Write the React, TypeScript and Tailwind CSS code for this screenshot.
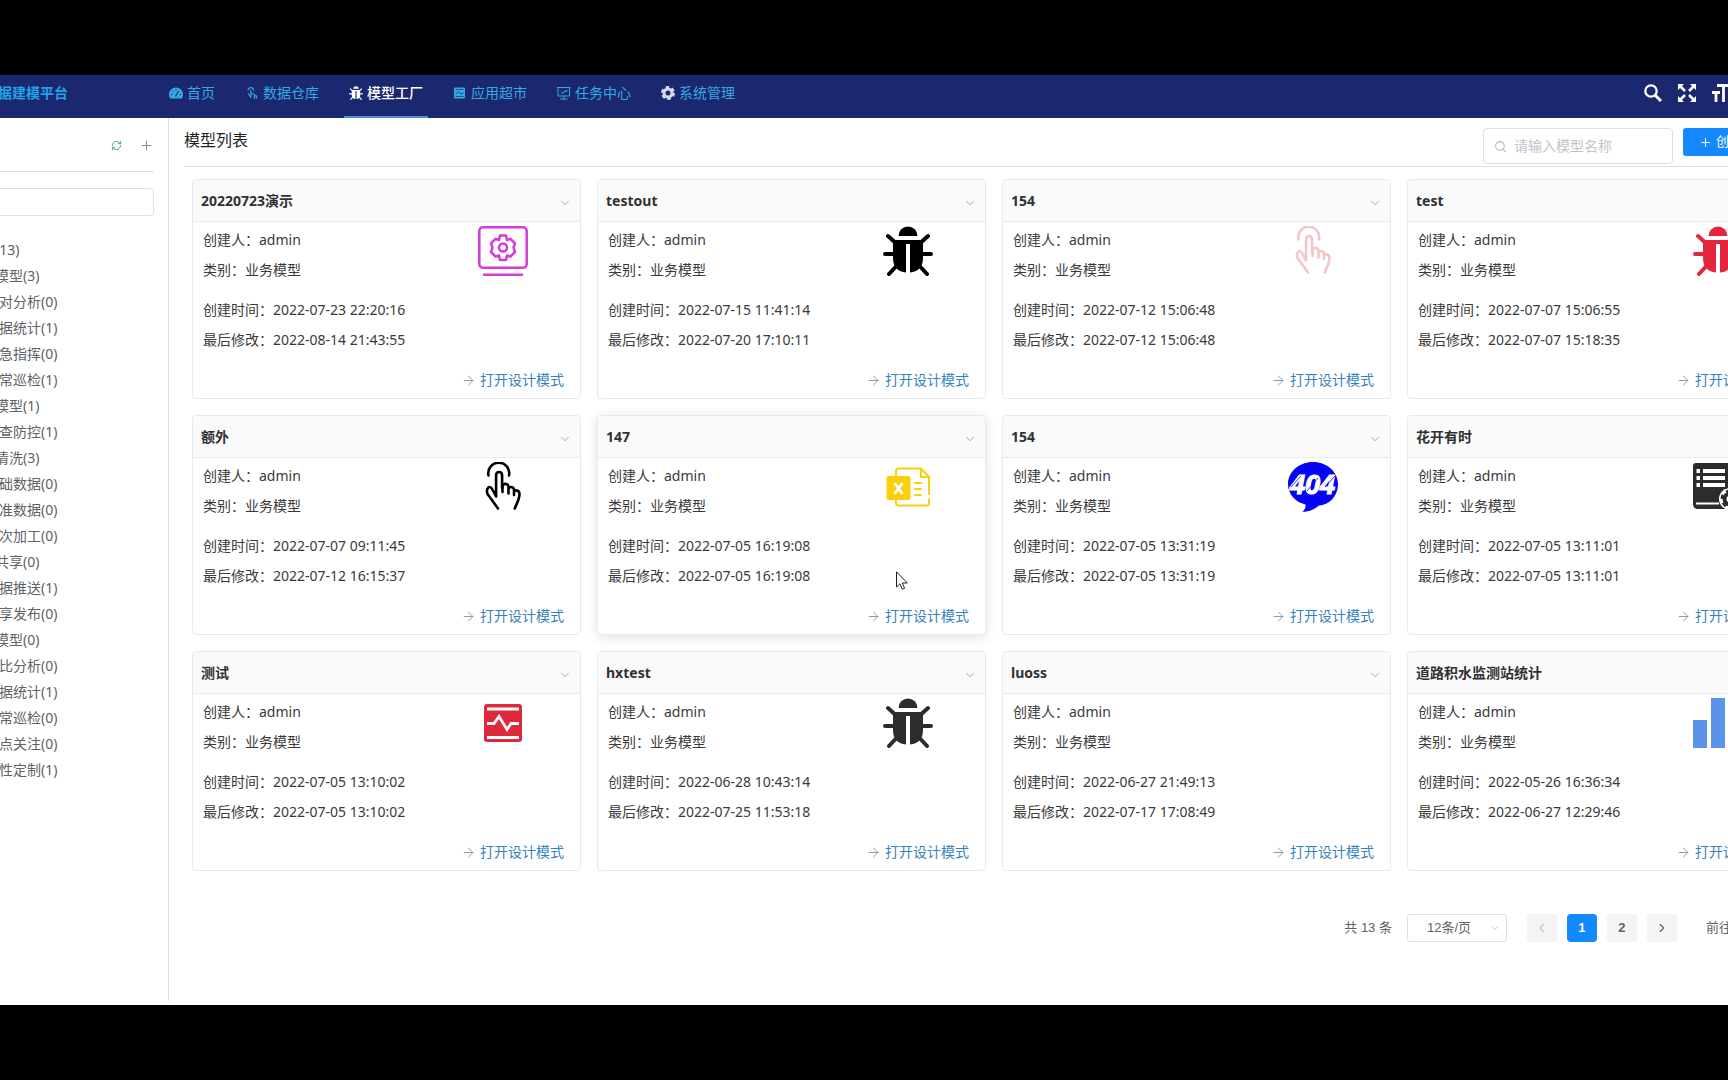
import React from 'react';
import { ArrowRight, ChevronDown, ChevronLeft, ChevronRight, Plus, RefreshCw, Search } from 'lucide-react';
import { clsx } from 'clsx';

type IconName = 'monitor' | 'bug' | 'hand' | 'excel' | 'notFound' | 'notebook' | 'pulse' | 'bars';

interface Model {
  name: string;
  created: string;
  modified: string;
  icon?: IconName;
  color?: string;
  active?: boolean;
}

const models: Model[] = [
  { name: '20220723演示', created: '2022-07-23 22:20:16', modified: '2022-08-14 21:43:55', icon: 'monitor', color: 'text-[#d53bd8]' },
  { name: 'testout', created: '2022-07-15 11:41:14', modified: '2022-07-20 17:10:11', icon: 'bug', color: 'text-black' },
  { name: '154', created: '2022-07-12 15:06:48', modified: '2022-07-12 15:06:48', icon: 'hand', color: 'text-[#f3c6ca]' },
  { name: 'test', created: '2022-07-07 15:06:55', modified: '2022-07-07 15:18:35', icon: 'bug', color: 'text-[#e3263c]' },
  { name: '额外', created: '2022-07-07 09:11:45', modified: '2022-07-12 16:15:37', icon: 'hand', color: 'text-black' },
  { name: '147', created: '2022-07-05 16:19:08', modified: '2022-07-05 16:19:08', icon: 'excel', color: 'text-[#fbd00a]', active: true },
  { name: '154', created: '2022-07-05 13:31:19', modified: '2022-07-05 13:31:19', icon: 'notFound', color: 'text-[#0505f5]' },
  { name: '花开有时', created: '2022-07-05 13:11:01', modified: '2022-07-05 13:11:01', icon: 'notebook', color: 'text-[#2c2c2c]' },
  { name: '测试', created: '2022-07-05 13:10:02', modified: '2022-07-05 13:10:02', icon: 'pulse', color: 'text-[#dc2a3c]' },
  { name: 'hxtest', created: '2022-06-28 10:43:14', modified: '2022-07-25 11:53:18', icon: 'bug', color: 'text-[#2c2c2c]' },
  { name: 'luoss', created: '2022-06-27 21:49:13', modified: '2022-07-17 17:08:49' },
  { name: '道路积水监测站统计', created: '2022-05-26 16:36:34', modified: '2022-06-27 12:29:46', icon: 'bars', color: 'text-[#5b93ea]' },
];

const tree = [
  { level: 0, label: '全部类(13)' },
  { level: 1, label: '业务模型(3)' },
  { level: 2, label: '比对分析(0)' },
  { level: 2, label: '数据统计(1)' },
  { level: 2, label: '应急指挥(0)' },
  { level: 2, label: '日常巡检(1)' },
  { level: 1, label: '管控模型(1)' },
  { level: 2, label: '排查防控(1)' },
  { level: 1, label: '数据清洗(3)' },
  { level: 2, label: '基础数据(0)' },
  { level: 2, label: '标准数据(0)' },
  { level: 2, label: '二次加工(0)' },
  { level: 1, label: '数据共享(0)' },
  { level: 2, label: '数据推送(1)' },
  { level: 2, label: '共享发布(0)' },
  { level: 1, label: '专题模型(0)' },
  { level: 2, label: '对比分析(0)' },
  { level: 2, label: '数据统计(1)' },
  { level: 2, label: '日常巡检(0)' },
  { level: 2, label: '重点关注(0)' },
  { level: 2, label: '个性定制(1)' },
];

const indent = ['pl-[49px]', 'pl-[63px]', 'pl-[81px]'];

function BugShape() {
  return (
    <>
      <path d="M15.500 10a9.500 9.500 0 0 1 19 0z" fill="currentColor" />
      <path d="M10 14h30v18c0 9-5 14-13 14.500V18h-4v28.500C15 46 10 41 10 32z" fill="currentColor" />
      <path d="M11 15.500 5 10M39 15.500l6-5.500M10 28h-8M40 28h8M12.500 41 6 48M37.500 41l6.500 7" stroke="currentColor" strokeWidth="4" strokeLinecap="round" fill="none" />
    </>
  );
}

function HandShape() {
  return (
    <g fill="none" stroke="currentColor" strokeWidth="2.600" strokeLinecap="round" strokeLinejoin="round">
      <path d="M10.500 13.500a10.500 10.500 0 1 1 20.500 0" />
      <path d="M20 46.500 9.500 32c-1.500-4 .5-7 2-7 1.200 0 2 .8 2.600 2l4 7.500V13.500c0-4.700 6-4.700 6 0v12.300" />
      <path d="M24.500 30v-6.500c2-3 6-1.500 6 1.500v6.500M30.500 26.500c2-2.500 5.500-1.500 5.500 1.500v5M36 29c2.500-1.500 5.300 0 5.500 2.700.2 5.300-2.700 9.300-4.700 14.800" />
    </g>
  );
}

function ModelIcon({ name, className }: { name: IconName; className?: string }) {
  return (
    <svg viewBox="0 0 50 50" className={clsx('h-[50px] w-[50px]', className)} aria-hidden="true">
      {name === 'monitor' && (
        <g fill="none" stroke="currentColor" strokeWidth="2.500" strokeLinecap="round" strokeLinejoin="round">
          <rect x="1.300" y="1.300" width="47.400" height="40.400" rx="3.500" />
          <path d="M6 48.700h38" />
          <path d="M22 9.500h6l1 4.500 3.500-1.200 4.500 4.500-1.500 4.200 1.500 4.500-4.500 4.500-3.500-1-1 4.500h-6l-1-4.500-3.500 1-4.500-4.500 1.500-4.500-1.500-4.200 4.500-4.500L21 14z" />
          <circle cx="25" cy="21.500" r="4" />
        </g>
      )}
      {name === 'bug' && <BugShape />}
      {name === 'hand' && <HandShape />}
      {name === 'excel' && (
        <g fill="none" stroke="currentColor" strokeWidth="2" strokeLinecap="round" strokeLinejoin="round">
          <path d="M13 13V9a2.500 2.500 0 0 1 2.500-2.500H38l8 8.500v17M13 38v3a2.500 2.500 0 0 0 2.500 2.500h28A2.500 2.500 0 0 0 46 41v-4M38 6.500V15h8" />
          <path d="M32 21h6M32 27h6M32 33h6" />
          <rect x="4.500" y="15" width="22" height="22" rx="1" fill="currentColor" />
          <path d="m11.500 21 8 11M19.500 21l-8 11" stroke="#fff" strokeWidth="2.800" strokeLinecap="butt" />
        </g>
      )}
      {name === 'notFound' && (
        <>
          <path d="M25 0c14 0 25 9.800 25 22S41 43 31 43.500c-4 3.500-9 6-16.500 6.500 2.500-2.500 3.500-5 3-7.500C7 40 0 32 0 22 0 9.800 11 0 25 0z" fill="currentColor" />
          <text x="24.500" y="32" textAnchor="middle" fontSize="27" fontStyle="italic" stroke="#fff" strokeWidth="1.200" className="fill-white font-['Liberation_Sans'] font-bold">404</text>
          <path d="m3 25 10-11M19 29l11-13M37 25l10-11" stroke="currentColor" strokeWidth="0.800" />
        </>
      )}
      {name === 'notebook' && (
        <>
          <path d="M3 1h44v46H5c-3 0-5-2-5-5V4c0-2 1-3 3-3z" fill="currentColor" />
          <path d="M3.500 7H7v4H3.500zM10 7h22v4H10zM3.500 14H7v4H3.500zM10 14h22v4H10zM3.500 21H7v4H3.500zM10 21h22v4H10z" fill="#fff" />
          <path d="M3 41.500h23" stroke="#fff" strokeWidth="2" />
          <circle cx="37" cy="37" r="11" fill="#fff" />
          <circle cx="37" cy="37" r="5.500" fill="none" stroke="currentColor" strokeWidth="4" />
          <circle cx="37" cy="37" r="8.200" fill="none" stroke="currentColor" strokeWidth="2.500" strokeDasharray="4.290 4.290" />
        </>
      )}
      {name === 'pulse' && (
        <>
          <rect x="6" y="6" width="38" height="38" rx="3" fill="currentColor" />
          <path d="M9 11h32M9 39.500h32M9 25.500h7l5-7 8 13 4-6h8" fill="none" stroke="#fff" strokeWidth="2.800" />
        </>
      )}
      {name === 'bars' && <path d="M0 22h14v28H0zM18 0h14v50H18zM36 12h14v38H36z" fill="currentColor" />}
    </svg>
  );
}

const navItems = [
  {
    label: '首页',
    icon: (
      <>
        <path fill="currentColor" d="M7 1.500a7 7 0 0 0-7 7c0 1.500.4 2.800 1.100 4h11.800c.7-1.200 1.100-2.500 1.100-4a7 7 0 0 0-7-7z" />
        <path d="M6.500 10.500 9.500 5" stroke="#1b276e" strokeWidth="1.200" />
        <path d="M2 8.500h1.200M3.500 5l.8.8M7 3v1M10.800 8.500H12" stroke="#1b276e" />
      </>
    ),
  },
  {
    label: '数据仓库',
    icon: (
      <g fill="none" stroke="currentColor" strokeWidth="1.200">
        <path d="M3 4.500a2.800 2.800 0 1 1 5.600 0M5.800 4v8M3 7.500l2.800 3.500M5.800 7.500 9.500 8.500v4.500M9.500 9.500l2 .5v2.500" />
      </g>
    ),
  },
  { label: '模型工厂', icon: <g transform="scale(.28)"><BugShape /></g> },
  {
    label: '应用超市',
    icon: (
      <>
        <rect x="1" y="1.500" width="11" height="11" rx="1" fill="currentColor" />
        <path d="M2.500 3.500h8M2.500 10.500h8M2.500 7H4l1.500-1.500L8 8.500 9 7h1.500" fill="none" stroke="#1b276e" strokeWidth="0.700" />
      </>
    ),
  },
  {
    label: '任务中心',
    icon: (
      <path d="M0 1.500h13.500M1 1.500v8.500h11.500V1.500M6.800 10v3M3 13h7.500M4 6l2 1.500 2-3 1 1.500 1.500-2" fill="none" stroke="currentColor" />
    ),
  },
  {
    label: '系统管理',
    icon: (
      <g className="text-[#d7dbee]" fill="none" stroke="currentColor">
        <circle cx="7" cy="7" r="4" strokeWidth="3" />
        <circle cx="7" cy="7" r="6" strokeWidth="2" strokeDasharray="3.600 2.680" />
      </g>
    ),
  },
];

function Header() {
  return (
    <header className="flex h-[43px] items-stretch justify-between bg-[#1b276e] pr-[94px] pl-[66px]">
      <div className="flex">
        <div className="w-[194px] pt-2 text-sm leading-5 font-bold text-[#22a3e8]">大数据建模平台</div>
        <nav className="flex gap-5">
          {navItems.map((item) => {
            const current = item.label === '模型工厂';
            return (
              <a
                key={item.label}
                href="#"
                className={clsx(
                  'flex items-start gap-1 border-b-2 px-[5px] pt-2 text-sm leading-5',
                  current ? 'border-[#4a8fdc] font-medium text-white' : 'border-transparent text-[#35a8e6]'
                )}
              >
                <svg viewBox="0 0 14 14" className="mt-[3px] h-3.5 w-3.5" aria-hidden="true">{item.icon}</svg>
                {item.label}
              </a>
            );
          })}
        </nav>
      </div>
      <div className="flex items-start gap-4 pt-[9px] text-white">
        <button type="button" aria-label="搜索">
          <svg viewBox="0 0 18 18" className="h-[18px] w-[18px]" fill="none" stroke="currentColor">
            <circle cx="7" cy="7" r="5.700" strokeWidth="2.300" />
            <path d="m11 11 6 6" strokeWidth="3" />
          </svg>
        </button>
        <button type="button" aria-label="全屏">
          <svg viewBox="0 0 18 18" className="h-[18px] w-[18px]">
            <path d="M0 0h6L0 6zM18 0v6l-6-6zM0 18v-6l6 6zM18 18h-6l6-6z" fill="currentColor" />
            <path d="m2 2 5 5M16 2l-5 5M2 16l5-5M16 16l-5-5" stroke="currentColor" strokeWidth="2.600" />
          </svg>
        </button>
        <button type="button" aria-label="布局大小">
          <svg viewBox="0 0 18 18" className="h-[18px] w-[18px]" fill="none" stroke="currentColor" strokeWidth="2.800">
            <path d="M5 1.500h13M11.500 1v17M0 8.500h8M4 8v10" />
          </svg>
        </button>
      </div>
    </header>
  );
}

function Sidebar() {
  return (
    <aside className="mb-1 w-[265px] shrink-0 border-r border-[#dcdfe6] pr-3.5">
      <div className="flex h-[54px] items-center justify-between border-b border-[#dcdfe6] pt-0.5 pl-3.5 text-base text-[#303133]">
        <span>模型分类</span>
        <div className="flex items-center gap-[17px]">
          <button type="button" aria-label="刷新" className="text-[#3f9d95]"><RefreshCw size={11} strokeWidth={2} /></button>
          <button type="button" aria-label="新增" className="text-[#6b8fa8]"><Plus size={15} strokeWidth={1.5} /></button>
        </div>
      </div>
      <input
        type="text"
        aria-label="筛选分类"
        className="mt-4 ml-3.5 block h-7 w-[236px] rounded border border-[#dcdfe6] px-3 text-sm outline-none"
      />
      <ul className="mt-[21px] text-sm text-[#606266]">
        {tree.map((node, i) => (
          <li key={i} className={clsx('h-[26px] leading-[26px] whitespace-nowrap', indent[node.level])}>
            {node.label}
          </li>
        ))}
      </ul>
    </aside>
  );
}

function ModelCard({ model }: { model: Model }) {
  return (
    <article
      className={clsx(
        'relative flex h-[220px] flex-col rounded border border-[#e8eaef] bg-white text-sm text-[#3a3a3a]',
        model.active && 'shadow-[0_2px_12px_rgba(0,0,0,0.12)]'
      )}
    >
      <div className="flex h-[42px] items-center justify-between rounded-t border-b border-[#e8eaef] bg-[#fafafa] pr-2 pl-2">
        <h3 className="font-bold text-[#303133]">{model.name}</h3>
        <button type="button" aria-label="更多操作" className="pt-1 text-[#9aa0ab]"><ChevronDown size={14} strokeWidth={1.5} /></button>
      </div>
      <div className="flex justify-between pr-[52px] pl-2.5">
        <div className="pt-[3px] leading-[30px]">
          <p>创建人：admin</p>
          <p>类别：业务模型</p>
          <p className="mt-2.5">创建时间：{model.created}</p>
          <p>最后修改：{model.modified}</p>
        </div>
        {model.icon && (
          <div className="pt-1">
            <ModelIcon name={model.icon} className={model.color} />
          </div>
        )}
      </div>
      <a href="#" className="mt-auto mb-2 flex items-center gap-1 self-end pr-4 leading-5 text-[#3583bd]">
        <ArrowRight size={15} strokeWidth={1.5} className="text-[#7f96ab]" />
        打开设计模式
      </a>
      {model.active && (
        <svg viewBox="0 0 12 19" className="absolute top-[155px] left-[298px] h-[19px] w-3" aria-hidden="true">
          <path d="M.5.800v15.200l3.400-3.200 2.400 5.400 2.300-1-2.300-5.200h5z" fill="#fff" stroke="#222" strokeWidth="1" />
        </svg>
      )}
    </article>
  );
}

function Pagination() {
  const btn = 'flex h-7 w-[30px] items-center justify-center rounded-sm font-bold';
  return (
    <div className="mt-[43px] flex items-center justify-end pr-[9px] font-['Liberation_Sans','Noto_Sans_CJK_SC',sans-serif] text-[13px] text-[#606266]">
      <span className="mr-[15px]">共 13 条</span>
      <div className="relative mr-5">
        <select aria-label="每页条数" className="block h-7 w-[100px] appearance-none rounded-[3px] border border-[#dcdfe6] bg-white pl-[19px] outline-none">
          <option>12条/页</option>
        </select>
        <ChevronDown size={12} strokeWidth={2} className="pointer-events-none absolute top-2 right-1.5 text-[#c0c4cc]" />
      </div>
      <div className="flex gap-2.5">
        <button type="button" aria-label="上一页" disabled className={clsx(btn, 'bg-[#f4f4f5] text-[#c0c4cc]')}><ChevronLeft size={14} /></button>
        <button type="button" className={clsx(btn, 'bg-[#1389fd] text-white')}>1</button>
        <button type="button" className={clsx(btn, 'bg-[#f4f4f5]')}>2</button>
        <button type="button" aria-label="下一页" className={clsx(btn, 'bg-[#f4f4f5]')}><ChevronRight size={14} /></button>
      </div>
      <label className="ml-[29px] flex items-center gap-1">
        前往
        <input type="text" defaultValue="1" className="h-7 w-[46px] rounded-[3px] border border-[#dcdfe6] text-center outline-none" />
        页
      </label>
    </div>
  );
}

export default function App() {
  return (
    <div className="min-h-screen overflow-hidden bg-black py-[75px] font-['Noto_Sans','Noto_Sans_CJK_SC',sans-serif]">
      <div className="-mx-24 flex min-h-[calc(100vh-150px)] flex-col bg-white">
        <Header />
        <div className="flex flex-1">
          <Sidebar />
          <main className="min-w-0 flex-1 pr-4 pl-[15px]">
            <div className="flex h-[49px] items-start justify-between border-b border-[#dcdfe6] pr-6">
              <h2 className="pt-2.5 text-base leading-6 text-[#1f1f1f]">模型列表</h2>
              <div className="flex items-start gap-2.5 pt-2.5">
                <label className="flex h-9 w-[190px] items-center gap-[7px] rounded border border-[#dcdfe6] bg-white px-2.5 text-[#b4b8c0]">
                  <Search size={13} strokeWidth={2} className="shrink-0" />
                  <input
                    type="text"
                    aria-label="模型名称"
                    placeholder="请输入模型名称"
                    className="w-full min-w-0 text-sm text-[#606266] outline-none placeholder:text-[#c0c4cc]"
                  />
                </label>
                <button type="button" className="flex h-7 items-center gap-1 rounded-[3px] bg-[#1389fd] px-4 text-[13px] text-white">
                  <Plus size={13} strokeWidth={2} />
                  创建模型
                </button>
              </div>
            </div>
            <div className="mt-3 grid grid-cols-4 gap-4 pr-3 pl-2">
              {models.map((model, i) => (
                <ModelCard key={i} model={model} />
              ))}
            </div>
            <Pagination />
          </main>
        </div>
      </div>
    </div>
  );
}
